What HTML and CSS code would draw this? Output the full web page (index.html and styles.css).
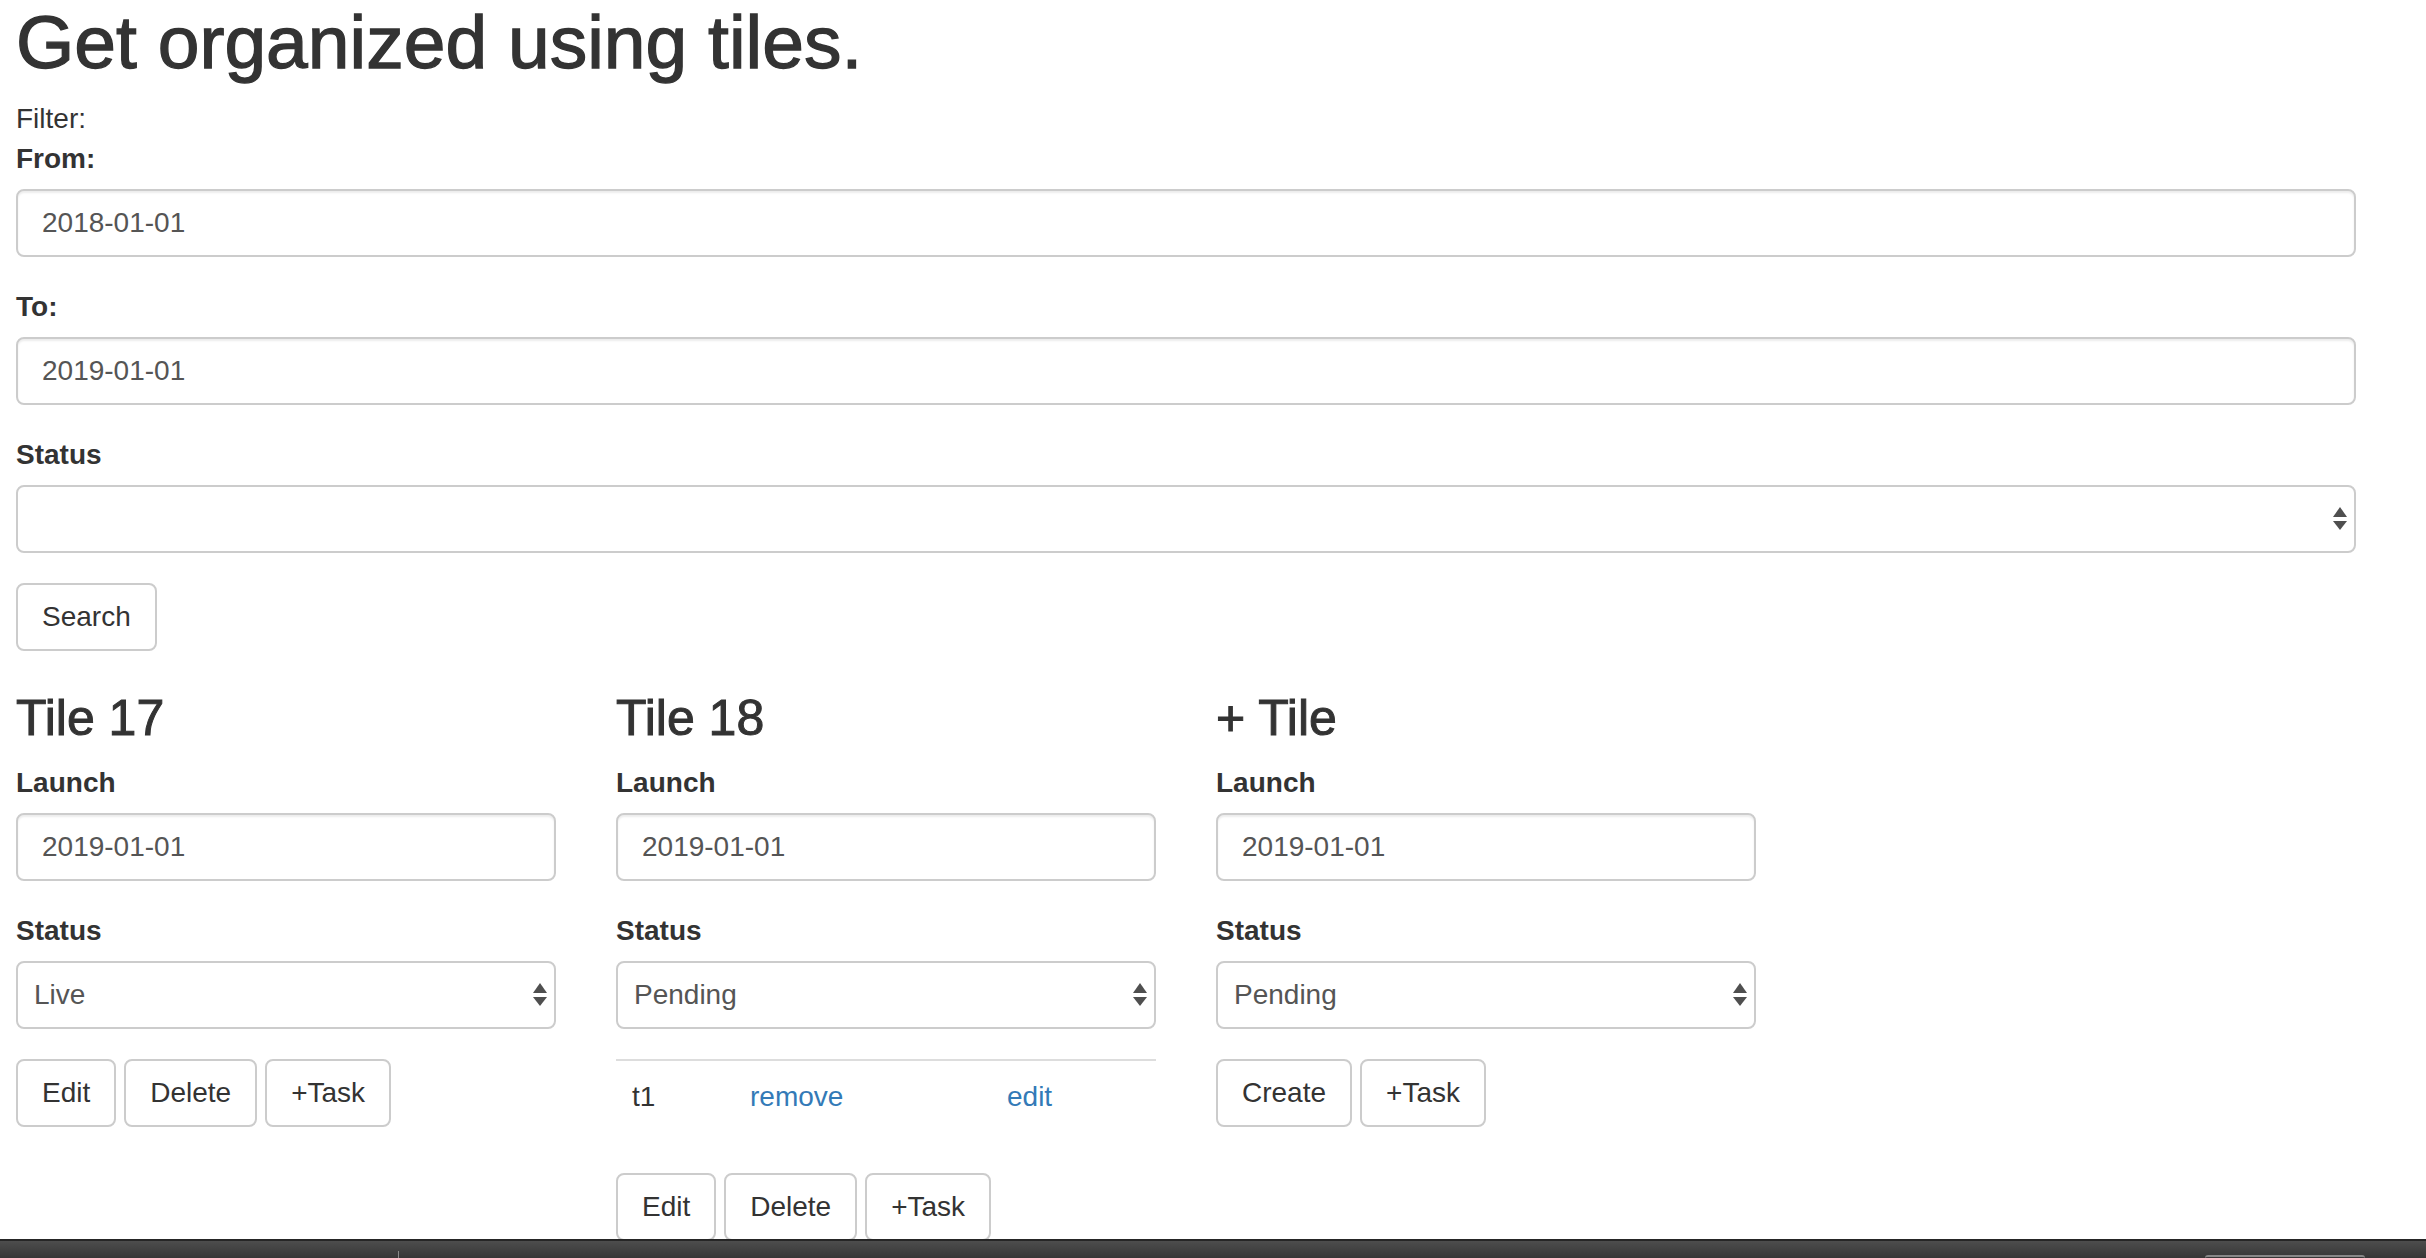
FILE: index.html
```html
<!DOCTYPE html>
<html lang="en">
<head>
<meta charset="utf-8">
<title>Tiles</title>
<link rel="stylesheet" href="styles.css">
</head>
<body>
<div class="page">
  <h1 class="title">Get organized using tiles.</h1>
  <div class="filter-caption">Filter:</div>
  <form class="filter">
    <div class="form-group">
      <label class="label">From:</label>
      <input class="control" type="text" value="2018-01-01">
    </div>
    <div class="form-group">
      <label class="label">To:</label>
      <input class="control" type="text" value="2019-01-01">
    </div>
    <div class="form-group">
      <label class="label">Status</label>
      <div class="select-wrap">
        <select class="control select"><option></option></select>
        <svg class="arrows" width="14" height="24" viewBox="0 0 14 24"><polygon points="7,0 14,10 0,10"/><polygon points="0,14 14,14 7,23"/></svg>
      </div>
    </div>
    <button class="btn" type="button">Search</button>
  </form>

  <div class="tiles">
    <section class="tile">
      <h3 class="tile-title">Tile 17</h3>
      <div class="form-group">
        <label class="label">Launch</label>
        <input class="control" type="text" value="2019-01-01">
      </div>
      <div class="form-group">
        <label class="label">Status</label>
        <div class="select-wrap">
          <select class="control select"><option>Live</option></select>
          <svg class="arrows" width="14" height="24" viewBox="0 0 14 24"><polygon points="7,0 14,10 0,10"/><polygon points="0,14 14,14 7,23"/></svg>
        </div>
      </div>
      <div class="btn-row">
        <button class="btn" type="button">Edit</button>
        <button class="btn" type="button">Delete</button>
        <button class="btn" type="button">+Task</button>
      </div>
    </section>

    <section class="tile">
      <h3 class="tile-title">Tile 18</h3>
      <div class="form-group">
        <label class="label">Launch</label>
        <input class="control" type="text" value="2019-01-01">
      </div>
      <div class="form-group">
        <label class="label">Status</label>
        <div class="select-wrap">
          <select class="control select"><option>Pending</option></select>
          <svg class="arrows" width="14" height="24" viewBox="0 0 14 24"><polygon points="7,0 14,10 0,10"/><polygon points="0,14 14,14 7,23"/></svg>
        </div>
      </div>
      <div class="tasks">
        <div class="task-row">
          <span class="task-cell">t1</span>
          <span class="task-cell"><a class="link" href="#">remove</a></span>
          <span class="task-cell"><a class="link" href="#">edit</a></span>
        </div>
      </div>
      <div class="btn-row">
        <button class="btn" type="button">Edit</button>
        <button class="btn" type="button">Delete</button>
        <button class="btn" type="button">+Task</button>
      </div>
    </section>

    <section class="tile">
      <h3 class="tile-title">+ Tile</h3>
      <div class="form-group">
        <label class="label">Launch</label>
        <input class="control" type="text" value="2019-01-01">
      </div>
      <div class="form-group">
        <label class="label">Status</label>
        <div class="select-wrap">
          <select class="control select"><option>Pending</option></select>
          <svg class="arrows" width="14" height="24" viewBox="0 0 14 24"><polygon points="7,0 14,10 0,10"/><polygon points="0,14 14,14 7,23"/></svg>
        </div>
      </div>
      <div class="btn-row">
        <button class="btn" type="button">Create</button>
        <button class="btn" type="button">+Task</button>
      </div>
    </section>
  </div>
</div>
<div class="dock">
  <span class="dock-tick"></span>
  <span class="dock-item"></span>
</div>
</body>
</html>
```

FILE: styles.css
```css
* { box-sizing: border-box; }

html, body {
  margin: 0;
  padding: 0;
  background: #fff;
}

body {
  font-family: "Liberation Sans", Arial, Helvetica, sans-serif;
  font-size: 28px;
  line-height: 40px;
  color: #333;
  overflow: hidden;
  height: 1258px;
}

.page {
  width: 2356px;
  padding: 0 0 0 16px;
}

.title {
  font-size: 75px;
  line-height: 1.1;
  font-weight: 400;
  -webkit-text-stroke: 1.3px #333;
  margin: 1px 0 15px;
  color: #333;
}

.filter-caption {
  line-height: 40px;
}

.form-group {
  margin-bottom: 30px;
}

.label {
  display: inline-block;
  font-weight: 700;
  margin-bottom: 10px;
  line-height: 40px;
}

.control {
  display: block;
  width: 100%;
  height: 68px;
  padding: 12px 24px;
  font-family: inherit;
  font-size: 28px;
  line-height: 40px;
  color: #555;
  background: #fff;
  border: 2px solid #ccc;
  border-radius: 8px;
  box-shadow: inset 0 2px 2px rgba(0, 0, 0, 0.075);
  outline: none;
}

.select-wrap {
  position: relative;
}

.select {
  -webkit-appearance: none;
  appearance: none;
  padding: 12px 16px;
  color: #555;
  box-shadow: none;
}

.arrows {
  position: absolute;
  right: 9px;
  top: 22px;
  fill: #4f4f4f;
  pointer-events: none;
}

.btn {
  display: inline-block;
  height: 68px;
  padding: 12px 24px;
  font-family: inherit;
  font-size: 28px;
  line-height: 40px;
  color: #333;
  background: #fff;
  border: 2px solid #ccc;
  border-radius: 8px;
  cursor: pointer;
}

.tiles {
  display: grid;
  grid-template-columns: 540px 540px 540px;
  column-gap: 60px;
  align-items: start;
}

.tile-title {
  font-size: 50px;
  line-height: 1.1;
  font-weight: 400;
  -webkit-text-stroke: 1px #333;
  margin: 40px 0 17px;
}

.btn-row {
  display: flex;
  gap: 8px;
}

.tasks {
  margin-bottom: 40px;
}

.task-row {
  display: grid;
  grid-template-columns: 118px 257px 1fr;
  border-top: 2px solid #ddd;
}

.task-cell {
  padding: 16px;
  line-height: 40px;
}

.link {
  color: #337ab7;
  text-decoration: none;
}

.dock {
  position: fixed;
  left: 0;
  right: 0;
  bottom: 0;
  height: 19px;
  background: linear-gradient(#4d4d4d, #363636);
  border-top: 2px solid #262626;
}

.dock-tick {
  position: absolute;
  left: 398px;
  bottom: 0;
  width: 1px;
  height: 7px;
  background: #8a8a8a;
}

.dock-item {
  position: absolute;
  left: 2205px;
  bottom: 0;
  width: 160px;
  height: 3px;
  border-top: 2px solid #888;
  border-radius: 3px 3px 0 0;
}
```
